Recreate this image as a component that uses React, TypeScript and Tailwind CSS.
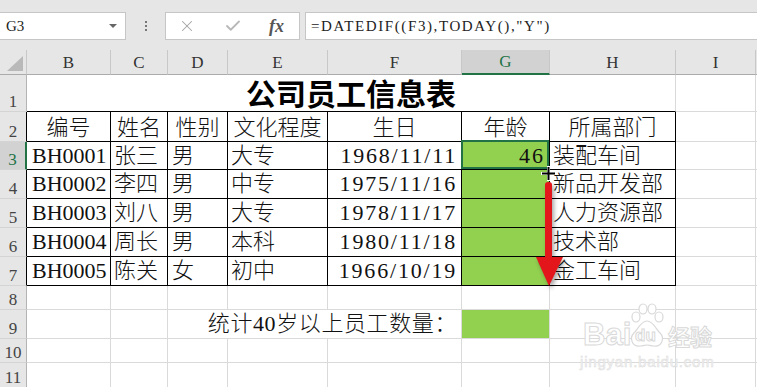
import { Check, X } from "lucide-react"

const people = [
  { id: "BH0001", name: "张三", sex: "男", edu: "大专", birth: "1968/11/11", age: "46", dept: "装配车间" },
  { id: "BH0002", name: "李四", sex: "男", edu: "中专", birth: "1975/11/16", age: "", dept: "新品开发部" },
  { id: "BH0003", name: "刘八", sex: "男", edu: "大专", birth: "1978/11/17", age: "", dept: "人力资源部" },
  { id: "BH0004", name: "周长", sex: "男", edu: "本科", birth: "1980/11/18", age: "", dept: "技术部" },
  { id: "BH0005", name: "陈关", sex: "女", edu: "初中", birth: "1966/10/19", age: "", dept: "金工车间" },
]

const letters = ["B", "C", "D", "E", "F", "G", "H", "I"]

// light sheet gridline / black table border
const g = "border-r border-b border-[#dadada]"
const t = "border-r border-b border-black"
const cell = "flex items-center text-[22px] font-light leading-none"

function RowHead({ n, className }: { n: number; className: string }) {
  return (
    <div className={`flex items-end justify-center border-b border-b-[#d4d4d4] pb-[1px] text-[17px] leading-none ${className}`}>
      {n}
    </div>
  )
}

const plainHead = "border-r border-r-[#b4b4b4] bg-[#e6e6e6] text-[#444]"
const tableHead = "border-r border-r-black bg-[#e6e6e6] text-[#444]"

function EmptyRow({ n }: { n: number }) {
  return (
    <>
      <RowHead n={n} className={plainHead} />
      {letters.map((l) => (
        <div key={l} className={g} />
      ))}
      <div className="border-b border-[#dadada]" />
    </>
  )
}

export default function App() {
  return (
    <div className="relative h-[387px] w-[757px] overflow-hidden bg-white font-['Liberation_Serif','Noto_Sans_CJK_SC',serif] text-[#111]">
      {/* formula bar */}
      <div className="flex h-[50px] items-start bg-[#e6e6e6] pt-[12px]">
        <div className="flex h-[28px] w-[126px] items-center justify-between border border-l-0 border-[#c6c6c6] bg-white pl-[6px] pr-[8px] text-[15px] text-[#222]">
          <span>G3</span>
          <span className="h-0 w-0 border-x-[4px] border-t-[4px] border-x-transparent border-t-[#666]" />
        </div>
        <div className="flex h-[28px] w-[39px] flex-col items-center justify-center gap-[2px]">
          <span className="h-[2px] w-[2px] bg-[#777]" />
          <span className="h-[2px] w-[2px] bg-[#777]" />
          <span className="h-[2px] w-[2px] bg-[#777]" />
        </div>
        <div className="flex h-[28px] w-[135px] items-center border border-[#c6c6c6] bg-white">
          <X className="ml-[12px] text-[#a3a3a3]" size={18} strokeWidth={1.4} />
          <Check className="ml-[28px] text-[#b8b8b8]" size={18} strokeWidth={2.4} />
          <span className="ml-[27px] text-[18px] font-semibold italic leading-none text-[#555]">fx</span>
        </div>
        <div className="ml-[5px] flex h-[28px] flex-1 items-center border border-r-0 border-[#c6c6c6] bg-white pl-[5px] text-[15px] tracking-[1.6px] text-[#222]">
          =DATEDIF((F3),TODAY(),"Y")
        </div>
      </div>

      {/* sheet */}
      <div className="grid grid-cols-[27px_84px_57px_60px_100px_134px_88px_126px_80px_1fr] grid-rows-[25px_37px_30px_28px_29px_29px_29px_29px_24px_29px_24px_25px]">
        {/* column headers */}
        <div className="flex items-end justify-end border-r border-b border-r-[#c8c8c8] border-b-[#ababab] bg-[#e6e6e6] p-[3px]">
          <svg width="16" height="15" viewBox="0 0 16 15">
            <polygon points="0,15 16,0 16,15" fill="#b9b9b9" />
          </svg>
        </div>
        {letters.map((l) =>
          l === "G" ? (
            <div key={l} className="flex items-center justify-center border-r border-b-2 border-r-[#c8c8c8] border-b-[#217346] bg-[#d2d2d2] text-[17px] leading-none text-[#217346]">
              {l}
            </div>
          ) : (
            <div key={l} className="flex items-center justify-center border-r border-b border-r-[#c8c8c8] border-b-[#ababab] bg-[#e6e6e6] text-[17px] leading-none text-[#333]">
              {l}
            </div>
          )
        )}
        <div className="border-b border-b-[#ababab] bg-[#e6e6e6]" />

        {/* row 1: title */}
        <RowHead n={1} className={plainHead} />
        <div className="col-span-7 flex items-center justify-center border-r border-b border-r-[#dadada] border-b-black pb-[2px] font-['Noto_Sans_CJK_SC',sans-serif] text-[30px] font-bold leading-none text-black">
          公司员工信息表
        </div>
        <div className={g} />
        <div className="border-b border-[#dadada]" />

        {/* row 2: headings */}
        <RowHead n={2} className={tableHead} />
        {["编号", "姓名", "性别", "文化程度", "生日", "年龄", "所属部门"].map((h) => (
          <div key={h} className={`${t} ${cell} justify-center pt-[2px]`}>
            {h}
          </div>
        ))}
        <div className={g} />
        <div className="border-b border-[#dadada]" />

        {/* rows 3-7: data */}
        {people.map((p, i) => (
          <div key={p.id} className="contents">
            <RowHead
              n={i + 3}
              className={i === 0 ? "border-r-2 border-r-[#217346] bg-[#d2d2d2] text-[#217346]" : tableHead}
            />
            <div className={`${t} ${cell} pl-[5px] text-[19px]`}>{p.id}</div>
            <div className={`${t} ${cell} pl-[3px]`}>{p.name}</div>
            <div className={`${t} ${cell} pl-[4px]`}>{p.sex}</div>
            <div className={`${t} ${cell} pl-[3px]`}>{p.edu}</div>
            <div className={`${t} ${cell} justify-end pr-[4px] tracking-[1.8px]`}>{p.birth}</div>
            <div className={`${t} ${cell} relative justify-end bg-[#92d050] pr-[4px] tracking-[2px]`}>
              {p.age}
              {i === 0 && (
                <div className="absolute -top-[2px] -left-[1px] right-0 bottom-0 border-2 border-[#217346]" />
              )}
            </div>
            <div className={`${t} ${cell} pl-[3px]`}>{p.dept}</div>
            <div className={g} />
            <div className="border-b border-[#dadada]" />
          </div>
        ))}

        <EmptyRow n={8} />

        {/* row 9: count */}
        <RowHead n={9} className={plainHead} />
        <div className={g} />
        <div className={g} />
        <div className={`col-span-3 ${g} ${cell} justify-end pr-[4px] tracking-[0.6px]`}>统计40岁以上员工数量：</div>
        <div className="border-r border-b border-[#dadada] bg-[#92d050]" />
        <div className={g} />
        <div className={g} />
        <div className="border-b border-[#dadada]" />

        <EmptyRow n={10} />
        <EmptyRow n={11} />
      </div>

      {/* fill-drag arrow */}
      <svg
        className="absolute top-[175px] left-[530px] drop-shadow-[2px_3px_2px_rgba(0,0,0,0.35)]"
        width="40"
        height="120"
        viewBox="0 0 40 120"
      >
        <rect x="15" y="7" width="7" height="80" rx="3" fill="#e3161b" />
        <polygon points="6,82 33,82 19,111" fill="#e3161b" />
      </svg>

      {/* crosshair cursor */}
      <svg className="absolute top-[166px] left-[541px]" width="15" height="15" viewBox="0 0 15 15">
        <path d="M6 0h3v6h6v3H9v6H6V9H0V6h6z" fill="white" />
        <path d="M6.5 1h2v5.5H14v2H8.5V14h-2V8.5H1v-2h5.5z" fill="black" />
      </svg>

      {/* watermark */}
      <div className="pointer-events-none absolute top-[303px] left-[580px] h-[70px] w-[140px] font-['Liberation_Sans',sans-serif] text-white">
        <span className="absolute top-[16px] left-[3px] text-[31px] font-bold leading-none [-webkit-text-stroke:1px_#d9d9d9]">
          Bai
        </span>
        <svg className="absolute top-0 left-[48px]" width="38" height="46" viewBox="0 0 38 46">
          <g fill="white" stroke="#d9d9d9" strokeWidth="1.2">
            <ellipse cx="8" cy="14" rx="4" ry="5" />
            <ellipse cx="15" cy="6" rx="4" ry="5" />
            <ellipse cx="24" cy="6" rx="4" ry="5" />
            <ellipse cx="31" cy="14" rx="4" ry="5" />
            <path d="M19 18c-6 0-9 8-13 12-5 5-2 14 6 13 3 0 5-1 7-1s4 1 7 1c8 1 11-8 6-13-4-4-7-12-13-12z" />
          </g>
        </svg>
        <span className="absolute top-[24px] left-[55px] text-[17px] font-bold leading-none text-white [-webkit-text-stroke:1px_#d9d9d9]">
          du
        </span>
        <span className="absolute top-[21px] left-[88px] font-['Noto_Sans_CJK_SC',sans-serif] text-[22px] font-bold leading-none [-webkit-text-stroke:1px_#d9d9d9]">
          经验
        </span>
        <span className="absolute top-[51px] left-0 text-[15px] leading-none tracking-[0.8px] text-[#f4f4f4] [-webkit-text-stroke:0.5px_#dcdcdc]">
          jingyan.baidu.com
        </span>
      </div>
    </div>
  )
}
